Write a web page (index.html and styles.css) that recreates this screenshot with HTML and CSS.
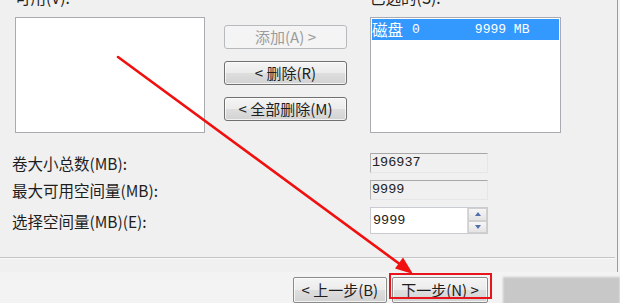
FILE: index.html
```html
<!DOCTYPE html>
<html lang="zh-CN">
<head>
<meta charset="utf-8">
<title>选择磁盘</title>
<link rel="stylesheet" href="styles.css">
</head>
<body>
<div class="page">
  <div class="main">
    <div class="lists">
      <div class="col col-left">
        <div class="cap">可用(V):</div>
        <div class="listbox"></div>
      </div>
      <div class="btns">
        <div class="btn disabled">添加(A) &gt;</div>
        <div class="btn">&lt; 删除(R)</div>
        <div class="btn">&lt; 全部删除(M)</div>
      </div>
      <div class="col col-right">
        <div class="cap">已选的(S):</div>
        <div class="listbox">
          <div class="item sel"><span class="disk">磁盘</span><span class="num">0</span><span class="size">9999 MB</span></div>
        </div>
      </div>
    </div>
    <div class="fields">
      <div class="flabel">卷大小总数(MB):</div>
      <div class="ro">196937</div>
      <div class="flabel">最大可用空间量(MB):</div>
      <div class="ro">9999</div>
      <div class="flabel">选择空间量(MB)(E):</div>
      <div class="spin">
        <div class="spin-val">9999</div>
        <div class="spin-btns">
          <div class="spin-btn"><span class="tri-up"></span></div>
          <div class="spin-btn"><span class="tri-down"></span></div>
        </div>
      </div>
    </div>
    <div class="sep"></div>
  </div>
  <div class="footer">
    <div class="btn nav">&lt; 上一步(B)</div>
    <div class="btn nav next">下一步(N) &gt;</div>
    <div class="blurbox"></div>
  </div>
  <div class="highlight"></div>
  <svg class="arrow" width="620" height="303" viewBox="0 0 620 303">
    <line x1="118" y1="57" x2="401" y2="265" stroke="#f01010" stroke-width="2.6" stroke-linecap="round"/>
    <polygon points="413,274 395,268.5 403,257.5" fill="#f01010"/>
  </svg>
</div>
</body>
</html>
```
FILE: styles.css
```css
* { box-sizing: border-box; }
html, body {
  margin: 0;
  padding: 0;
  background: #f3f3f3;
}
body {
  font-family: "Noto Sans CJK SC", "DejaVu Sans", sans-serif;
  color: #222;
}
.page {
  position: relative;
  width: 620px;
  height: 303px;
  overflow: hidden;
}
.main {
  width: 618px;
  height: 272px;
  background: #f0f0f0;
  border-right: 1px solid #9c9c9c;
  display: flex;
  flex-direction: column;
}
.lists {
  display: flex;
  padding-left: 15px;
  margin-top: -11px;
}
.col { display: flex; flex-direction: column; }
.col-left { width: 190px; }
.col-right { width: 191px; margin-left: 23px; }
.cap {
  font-size: 15.5px;
  line-height: 17px;
  height: 17px;
  margin-bottom: 11px;
  white-space: nowrap;
}
.listbox {
  height: 116px;
  background: #fff;
  border: 1px solid #a9abb0;
  padding: 1px;
}
.item {
  height: 21px;
  display: flex;
  align-items: center;
  color: #fff;
  white-space: nowrap;
}
.sel { background: #3399ff; }
.disk { font-size: 15.5px; line-height: 21px; }
.num, .size {
  font-family: "Liberation Mono", monospace;
  font-size: 13px;
}
.num { margin-left: 9px; }
.size { margin-left: 55px; }
.btns {
  width: 123px;
  margin-left: 19px;
  padding-top: 36px;
  display: flex;
  flex-direction: column;
  gap: 12px;
}
.btn {
  height: 24px;
  border: 1px solid #707070;
  border-radius: 3px;
  background: linear-gradient(#f4f4f4 0%, #ececec 48%, #dedede 52%, #d2d2d2 100%);
  box-shadow: inset 0 0 0 1px rgba(255,255,255,0.7);
  font-size: 15px;
  line-height: 22px;
  text-align: center;
  white-space: nowrap;
  color: #1e1e1e;
}
.btn.disabled {
  border-color: #b7babc;
  background: #f4f4f4;
  color: #9c9c9c;
  box-shadow: none;
}
.fields {
  display: grid;
  grid-template-columns: 358px 118px;
  grid-template-rows: 20px 20px 27px;
  row-gap: 7px;
  padding-left: 12px;
  margin-top: 20px;
}
.flabel {
  align-self: center;
  font-size: 15.5px;
  line-height: 18px;
  white-space: nowrap;
  color: #1e1e1e;
}
.ro {
  background: #f0f0f0;
  border-top: 1px solid #a8a8a8;
  border-left: 1px solid #b4b4b4;
  border-right: 1px solid #e6e6e6;
  border-bottom: 1px solid #e6e6e6;
  font-family: "Liberation Mono", monospace;
  font-size: 13.5px;
  line-height: 18px;
  padding-left: 1px;
}
.spin {
  display: flex;
  border: 1px solid #c8cbd0;
  background: #fff;
}
.spin-val {
  flex: 1;
  font-family: "Liberation Mono", monospace;
  font-size: 13.5px;
  line-height: 25px;
  padding-left: 2px;
}
.spin-btns {
  width: 20px;
  display: flex;
  flex-direction: column;
  background: #e9e9e9;
  border-left: 1px solid #d8d8d8;
}
.spin-btn {
  flex: 1;
  display: flex;
  align-items: center;
  justify-content: center;
  border: 1px solid #d0d0d0;
  background: linear-gradient(#f6f6f6, #e4e4e4);
}
.tri-up {
  width: 0; height: 0;
  border-left: 3.5px solid transparent;
  border-right: 3.5px solid transparent;
  border-bottom: 4px solid #4f6fa8;
}
.tri-down {
  width: 0; height: 0;
  border-left: 3.5px solid transparent;
  border-right: 3.5px solid transparent;
  border-top: 4px solid #4f6fa8;
}
.sep {
  width: 615px;
  height: 2px;
  margin-top: 23px;
  border-top: 1px solid #c4c4c4;
  border-bottom: 1px solid #fafafa;
}
.footer {
  display: flex;
  padding-left: 293px;
  padding-top: 5px;
}
.btn.nav {
  height: 26px;
  line-height: 23px;
  border-color: #8a8a8a;
  border-radius: 2px;
}
.btn.nav:first-child { width: 94px; }
.btn.next { width: 97px; margin-left: 5px; }
.blurbox {
  width: 117px;
  height: 28px;
  margin-left: 15px;
  background: #c8c8c8;
  filter: blur(1.2px);
}
.highlight {
  position: absolute;
  left: 389px;
  top: 273px;
  width: 103px;
  height: 26px;
  border: 2px solid #e8141b;
}
.arrow {
  position: absolute;
  left: 0;
  top: 0;
  pointer-events: none;
}
```
